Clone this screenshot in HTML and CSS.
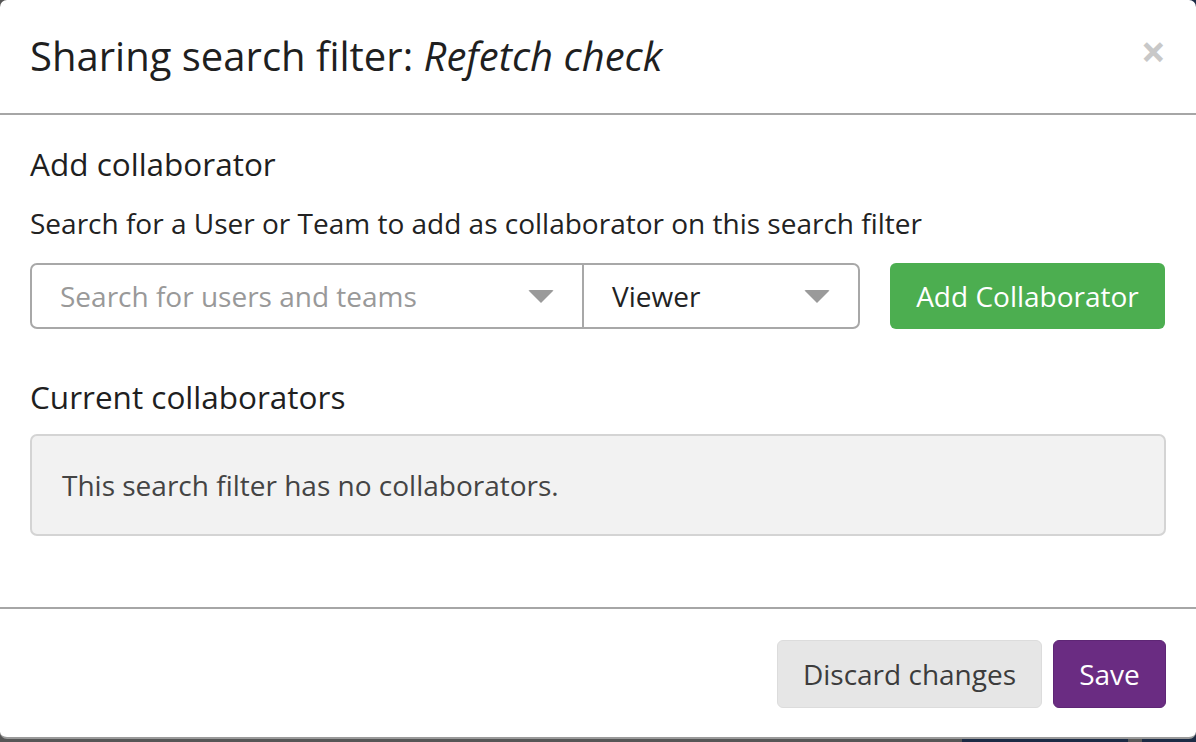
FILE: index.html
```html
<!DOCTYPE html>
<html>
<head>
<meta charset="utf-8">
<link rel="stylesheet" href="styles.css">
</head>
<body>
<div class="backdrop">
  <div class="bd bd-grey1"></div>
  <div class="bd bd-navy1"></div>
  <div class="bd bd-grey2"></div>
  <div class="bd bd-navy2"></div>
</div>
<div class="modal">
  <div class="modal-header">
    <h3 class="modal-title">Sharing search filter: <em>Refetch check</em></h3>
    <span class="close">×</span>
  </div>
  <div class="modal-body">
    <h4 class="section-title first">Add collaborator</h4>
    <p class="help">Search for a User or Team to add as collaborator on this search filter</p>
    <div class="add-row">
      <div class="select-group">
        <div class="select search">
          <span class="placeholder">Search for users and teams</span>
          <span class="caret"></span>
        </div>
        <div class="select role">
          <span class="value">Viewer</span>
          <span class="caret"></span>
        </div>
      </div>
      <button class="btn btn-success">Add Collaborator</button>
    </div>
    <h4 class="section-title second">Current collaborators</h4>
    <div class="well">This search filter has no collaborators.</div>
  </div>
  <div class="modal-footer">
    <button class="btn btn-default">Discard changes</button>
    <button class="btn btn-primary">Save</button>
  </div>
</div>
</body>
</html>
```

FILE: styles.css
```css
html, body {
  margin: 0;
  padding: 0;
  width: 1196px;
  height: 742px;
  overflow: hidden;
}
body {
  font-family: "Open Sans", "Liberation Sans", sans-serif;
  color: #222;
  background: #555;
  position: relative;
}
.backdrop {
  display: flex;
  height: 742px;
}
.bd { height: 100%; }
.bd-grey1 { width: 962px; background: #565656; }
.bd-navy1 { width: 166px; background: #1c2b45; }
.bd-grey2 { width: 14px; background: #5a5a5a; }
.bd-navy2 { flex: 1; background: #1c2b45; }

.modal {
  position: absolute;
  top: 0;
  left: 0;
  width: 1196px;
  height: 739px;
  box-sizing: border-box;
  background: #fff;
  border-radius: 7px;
  border-bottom: 2px solid #9a9a9a;
  display: flex;
  flex-direction: column;
}
.modal-header {
  height: 115px;
  box-sizing: border-box;
  padding: 0 30px;
  border-bottom: 2px solid #a6a6a6;
  display: flex;
  align-items: center;
  justify-content: space-between;
}
.modal-title {
  margin: 0;
  font-size: 40px;
  font-weight: 400;
  color: #1f1f1f;
  line-height: 48px;
  padding-bottom: 2px;
}
.modal-title em { font-style: italic; }
.close {
  font-size: 44px;
  font-weight: 700;
  color: #c8c8c8;
  line-height: 1;
  margin-right: 0;
  margin-top: -12px;
}
.modal-body {
  flex: 1;
  padding: 0 30px;
  border-bottom: 2px solid #a6a6a6;
}
.section-title {
  margin: 0;
  font-size: 31.5px;
  font-weight: 400;
  color: #1f1f1f;
  line-height: 40px;
}
.section-title.first { margin-top: 29px; }
.section-title.second { margin-top: 48px; }
.help {
  margin: 21px 0 0;
  font-size: 28px;
  line-height: 36px;
  color: #222;
}
.add-row {
  display: flex;
  margin-top: 22px;
  gap: 30px;
}
.select-group {
  display: flex;
  width: 830px;
  height: 66px;
  box-sizing: border-box;
  border: 2px solid #a8a8a8;
  border-radius: 7px;
}
.select {
  display: flex;
  align-items: center;
  justify-content: space-between;
  padding: 0 28px 0 28px;
  font-size: 28px;
}
.select.search {
  width: 552px;
  box-sizing: border-box;
  border-right: 2px solid #a8a8a8;
}
.select.role {
  flex: 1;
}
.placeholder { color: #999; }
.value { color: #222; }
.caret {
  width: 0;
  height: 0;
  border-left: 13px solid transparent;
  border-right: 13px solid transparent;
  border-top: 13px solid #9a9a9a;
  border-radius: 2px;
}
.btn {
  font-family: "Open Sans", "Liberation Sans", sans-serif;
  font-size: 28px;
  border: 0;
  border-radius: 6px;
  cursor: pointer;
  padding: 0;
}
.btn-success {
  width: 275px;
  height: 66px;
  background: #4cae50;
  color: #fff;
}
.well {
  margin-top: 17px;
  height: 102px;
  box-sizing: border-box;
  background: #f2f2f2;
  border: 2px solid #d4d4d4;
  border-radius: 7px;
  padding: 0 30px;
  display: flex;
  align-items: center;
  font-size: 28px;
  color: #444;
}
.modal-footer {
  height: 128px;
  box-sizing: border-box;
  padding: 31px 30px 0;
  display: flex;
  justify-content: flex-end;
  align-items: flex-start;
  gap: 11px;
}
.btn-default {
  width: 265px;
  height: 68px;
  background: #e6e6e6;
  border: 1px solid #dcdcdc;
  color: #3c3c3c;
}
.btn-primary {
  width: 113px;
  height: 68px;
  background: #6a2c82;
  border: 1px solid #5e2675;
  color: #fff;
}
```
